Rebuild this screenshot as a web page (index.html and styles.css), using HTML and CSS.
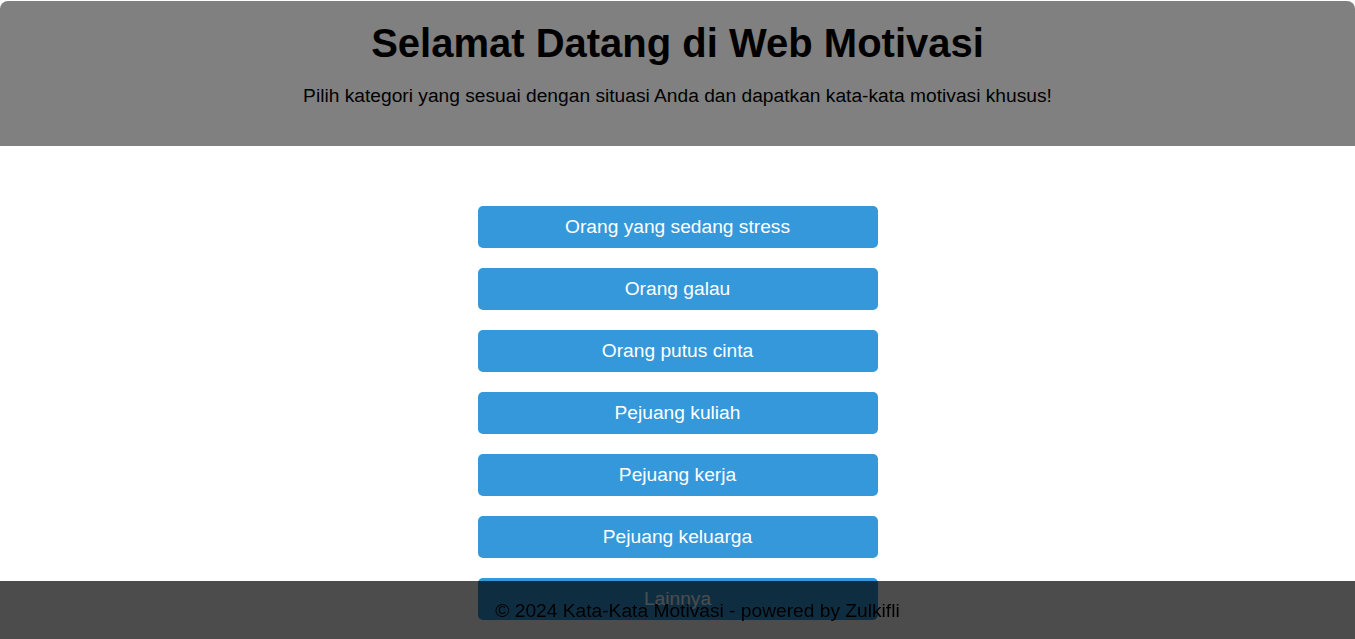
FILE: index.html
```html
<!DOCTYPE html>
<html lang="id">
<head>
<meta charset="utf-8">
<title>Web Motivasi</title>
<link rel="stylesheet" href="styles.css">
</head>
<body>
<header class="hero">
  <h1 class="hero-title">Selamat Datang di Web Motivasi</h1>
  <p class="hero-sub">Pilih kategori yang sesuai dengan situasi Anda dan dapatkan kata-kata motivasi khusus!</p>
</header>
<main class="menu">
  <button class="menu-btn">Orang yang sedang stress</button>
  <button class="menu-btn">Orang galau</button>
  <button class="menu-btn">Orang putus cinta</button>
  <button class="menu-btn">Pejuang kuliah</button>
  <button class="menu-btn">Pejuang kerja</button>
  <button class="menu-btn">Pejuang keluarga</button>
  <button class="menu-btn">Lainnya</button>
</main>
<footer class="foot">© 2024 Kata-Kata Motivasi - powered by Zulkifli</footer>
</body>
</html>
```
FILE: styles.css
```css
html, body {
  margin: 0;
  padding: 0;
  background: #fff;
  font-family: "Liberation Sans", Arial, sans-serif;
}
body {
  padding-top: 1px;
}
.hero {
  background: #808080;
  border-radius: 8px 8px 0 0;
  text-align: center;
  padding: 19px 20px 39px;
  color: #000;
}
.hero-title {
  margin: 0 0 19px;
  font-size: 40px;
  line-height: 46px;
  font-weight: bold;
}
.hero-sub {
  margin: 0;
  font-size: 19.2px;
  line-height: 22px;
}
.menu {
  display: flex;
  flex-direction: column;
  align-items: center;
  gap: 20px;
  padding: 60px 0 80px;
}
.menu-btn {
  width: 400px;
  height: 42px;
  border: none;
  border-radius: 5px;
  background: #3498db;
  color: #fff;
  font-family: "Liberation Sans", Arial, sans-serif;
  font-size: 19.2px;
  padding: 0;
  cursor: pointer;
}
.foot {
  position: fixed;
  left: 0;
  right: 0;
  bottom: 0;
  height: 58px;
  box-sizing: border-box;
  padding: 19px 0 0 40px;
  line-height: 22px;
  text-align: center;
  font-size: 19.2px;
  color: #000;
  background: rgba(0, 0, 0, 0.7);
}
```
